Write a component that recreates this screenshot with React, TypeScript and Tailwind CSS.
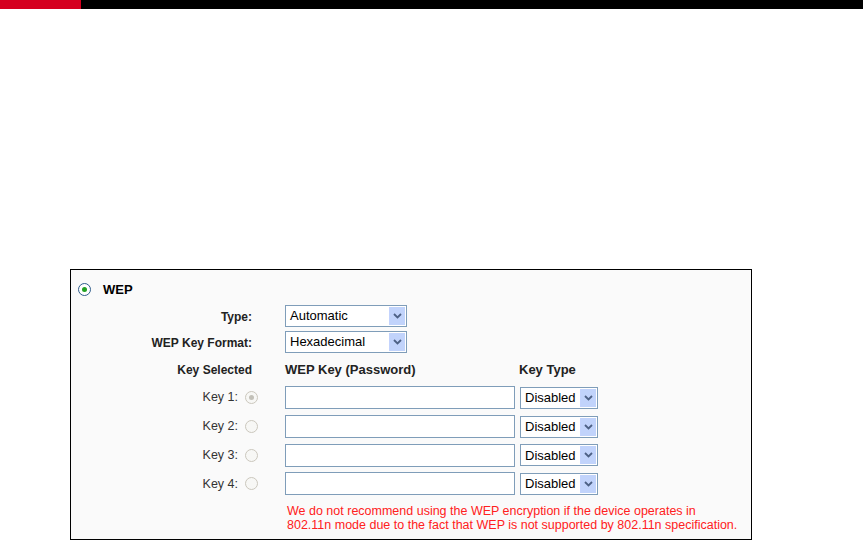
import React from 'react';

const Chevron: React.FC = () => (
  <div className="flex h-full w-[16px] items-center justify-center border-l border-[#c3d3fd] bg-[#c1d3fb]">
    <svg width="9" height="6" viewBox="0 0 9 6">
      <path d="M1 1 L4.5 4.5 L8 1" stroke="#4d6185" strokeWidth="1.8" fill="none" />
    </svg>
  </div>
);

const Select: React.FC<{ value: string; width: string }> = ({ value, width }) => (
  <div className={`flex h-[22px] ${width} items-center justify-between border border-[#7f9db9] bg-white p-[1px]`}>
    <span className="pl-[3px] text-[13px] leading-none text-black">{value}</span>
    <Chevron />
  </div>
);

const Radio: React.FC<{ checked?: boolean; disabled?: boolean }> = ({ checked, disabled }) => (
  <span
    className={`flex h-[13px] w-[13px] items-center justify-center rounded-full border ${
      disabled ? 'border-[#cbc7bd] bg-[#f7f7f5]' : 'border-[#2f5c8a] bg-white'
    }`}
  >
    {checked && (
      <span className={`h-[5px] w-[5px] rounded-full ${disabled ? 'bg-[#c2c0b8]' : 'bg-[#21a121]'}`} />
    )}
  </span>
);

const keys = ['Key 1:', 'Key 2:', 'Key 3:', 'Key 4:'];

const App: React.FC = () => {
  return (
    <div className="h-[540px] w-[863px] overflow-hidden bg-white" style={{ fontFamily: '"Liberation Sans", Arial, sans-serif' }}>
      <div className="flex h-[9px]">
        <div className="w-[81px] bg-[#d5001f]" />
        <div className="flex-1 bg-black" />
      </div>

      <div className="ml-[70px] mt-[260px] h-[271px] w-[682px] border border-black bg-[#fafafa]">
        <div className="flex items-center gap-[12px] pl-[7px] pt-[10px]">
          <Radio checked />
          <span className="text-[13px] font-bold text-black">WEP</span>
        </div>

        <div className="mt-[5px] grid grid-cols-[188px_1fr] text-[12px] text-[#222]">
          <div className="flex h-[26px] items-start justify-end pr-[7px] pt-[3px] font-bold">Type:</div>
          <div className="pl-[26px]">
            <Select value="Automatic" width="w-[122px]" />
          </div>
          <div className="flex h-[26px] items-start justify-end pr-[7px] pt-[3px] font-bold">WEP Key Format:</div>
          <div className="pl-[26px]">
            <Select value="Hexadecimal" width="w-[122px]" />
          </div>
          <div className="flex h-[27px] items-start justify-end pr-[7px] pt-[4px] font-bold">Key Selected</div>
          <div className="flex pl-[26px] pt-[3px] text-[13px] font-bold">
            <span className="w-[234px]">WEP Key (Password)</span>
            <span>Key Type</span>
          </div>
          {keys.map((k, i) => (
            <React.Fragment key={k}>
              <div className="flex h-[28.7px] items-center justify-end gap-[7px] pr-[1px] text-[12.5px] text-[#333]">
                <span>{k}</span>
                <Radio checked={i === 0} disabled />
              </div>
              <div className="flex h-[28.7px] items-center gap-[5px] pl-[26px]">
                <div className="h-[23px] w-[230px] border border-[#7f9db9] bg-white" />
                <Select value="Disabled" width="w-[78px]" />
              </div>
            </React.Fragment>
          ))}
          <div />
          <div className="pl-[28px] pt-[6px] text-[12.5px] leading-[14px] text-[#ff2020]">
            We do not recommend using the WEP encryption if the device operates in
            <br />
            802.11n mode due to the fact that WEP is not supported by 802.11n specification.
          </div>
        </div>
      </div>
    </div>
  );
};

export default App;
